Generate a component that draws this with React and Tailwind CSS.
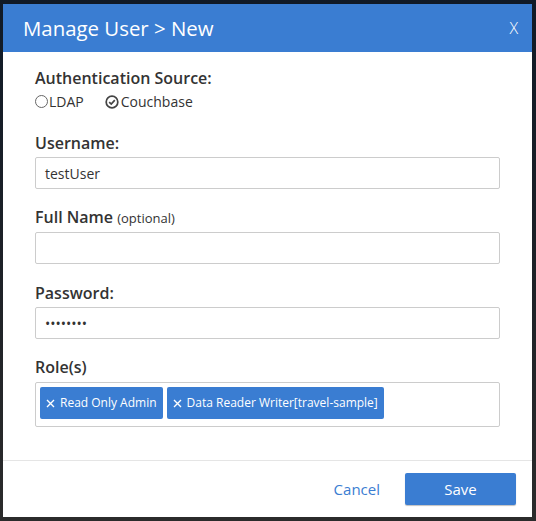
import React from 'react';

// ── Small pieces ─────────────────────────────────────────────────────────────

function Label({ children, className = '' }) {
  return (
    <label className={`block text-[16px] leading-[22px] font-semibold text-[#333] ${className}`}>
      {children}
    </label>
  );
}

function Field({ value = '', className = '' }) {
  return (
    <div className={`h-[32px] border border-[#ccc] rounded-[2px] px-[9px] flex items-center text-[14px] text-[#333] ${className}`}>
      {value}
    </div>
  );
}

function RoleTag({ text }) {
  return (
    <span className="h-[32px] flex items-center gap-[5px] px-[6px] bg-[#3a7dd2] text-white text-[12px] rounded-[2px]">
      <svg width="9" height="9" viewBox="0 0 9 9" className="flex-shrink-0">
        <path d="M1 1 L8 8 M8 1 L1 8" stroke="white" strokeWidth="1.4" />
      </svg>
      {text}
    </span>
  );
}

// ── Component ────────────────────────────────────────────────────────────────

export default function App() {
  return (
    <div
      className="w-[536px] h-[521px] pt-[4px] pl-[3px] bg-gradient-to-b from-[#101a27] via-[#1d2127] to-[#2b2b2b]"
      style={{ fontFamily: '"Open Sans", "Noto Sans", sans-serif' }}
    >
      <div className="w-[529px] h-[513px] bg-white flex flex-col">
        {/* Header */}
        <div className="h-[48px] bg-[#3a7dd2] flex items-center justify-between pl-[20px] pr-[14px] text-white">
          <h2 className="text-[20.4px] leading-[26px]">Manage User &gt; New</h2>
          <span className="text-[16px] font-light">X</span>
        </div>

        {/* Body */}
        <div className="flex-1 px-[32px] pt-[15px]">
          <Label>Authentication Source:</Label>
          <div className="mt-[3px] flex items-center gap-[21px] text-[14px] leading-[19px] text-[#333]">
            <span className="flex items-center gap-[1px]">
              <span className="w-[13px] h-[13px] rounded-full border border-[#666]" />
              LDAP
            </span>
            <span className="flex items-center gap-[2px]">
              <svg width="14" height="14" viewBox="0 0 13 13">
                <circle cx="6.5" cy="6.5" r="5.4" fill="none" stroke="#444" strokeWidth="1.6" />
                <path d="M3.9 6.6 L5.8 8.4 L9.1 4.8" fill="none" stroke="#444" strokeWidth="1.6" />
              </svg>
              Couchbase
            </span>
          </div>

          <Label className="mt-[21px]">Username:</Label>
          <Field value="testUser" className="mt-[3px]" />

          <Label className="mt-[17px]">
            Full Name <span className="text-[13px] font-normal">(optional)</span>
          </Label>
          <Field className="mt-[3px]" />

          <Label className="mt-[18px]">Password:</Label>
          <Field value="••••••••" className="mt-[3px] text-[10px]" />

          <Label className="mt-[17px]">Role(s)</Label>
          <div className="mt-[4px] h-[45px] border border-[#ccc] rounded-[2px] px-[4px] pt-[4px] flex items-start gap-[4px]">
            <RoleTag text="Read Only Admin" />
            <RoleTag text="Data Reader Writer[travel-sample]" />
          </div>
        </div>

        {/* Footer */}
        <div className="h-[57px] border-t border-[#e5e5e5] flex items-center justify-end pr-[16px] gap-[25px]">
          <button className="text-[15px] text-[#3a7dd2]">Cancel</button>
          <button className="w-[111px] h-[32px] bg-[#3a7dd2] text-white text-[15px] rounded-[2px] shadow-[0_1px_1px_rgba(0,0,0,0.25)]">
            Save
          </button>
        </div>
      </div>
    </div>
  );
}
